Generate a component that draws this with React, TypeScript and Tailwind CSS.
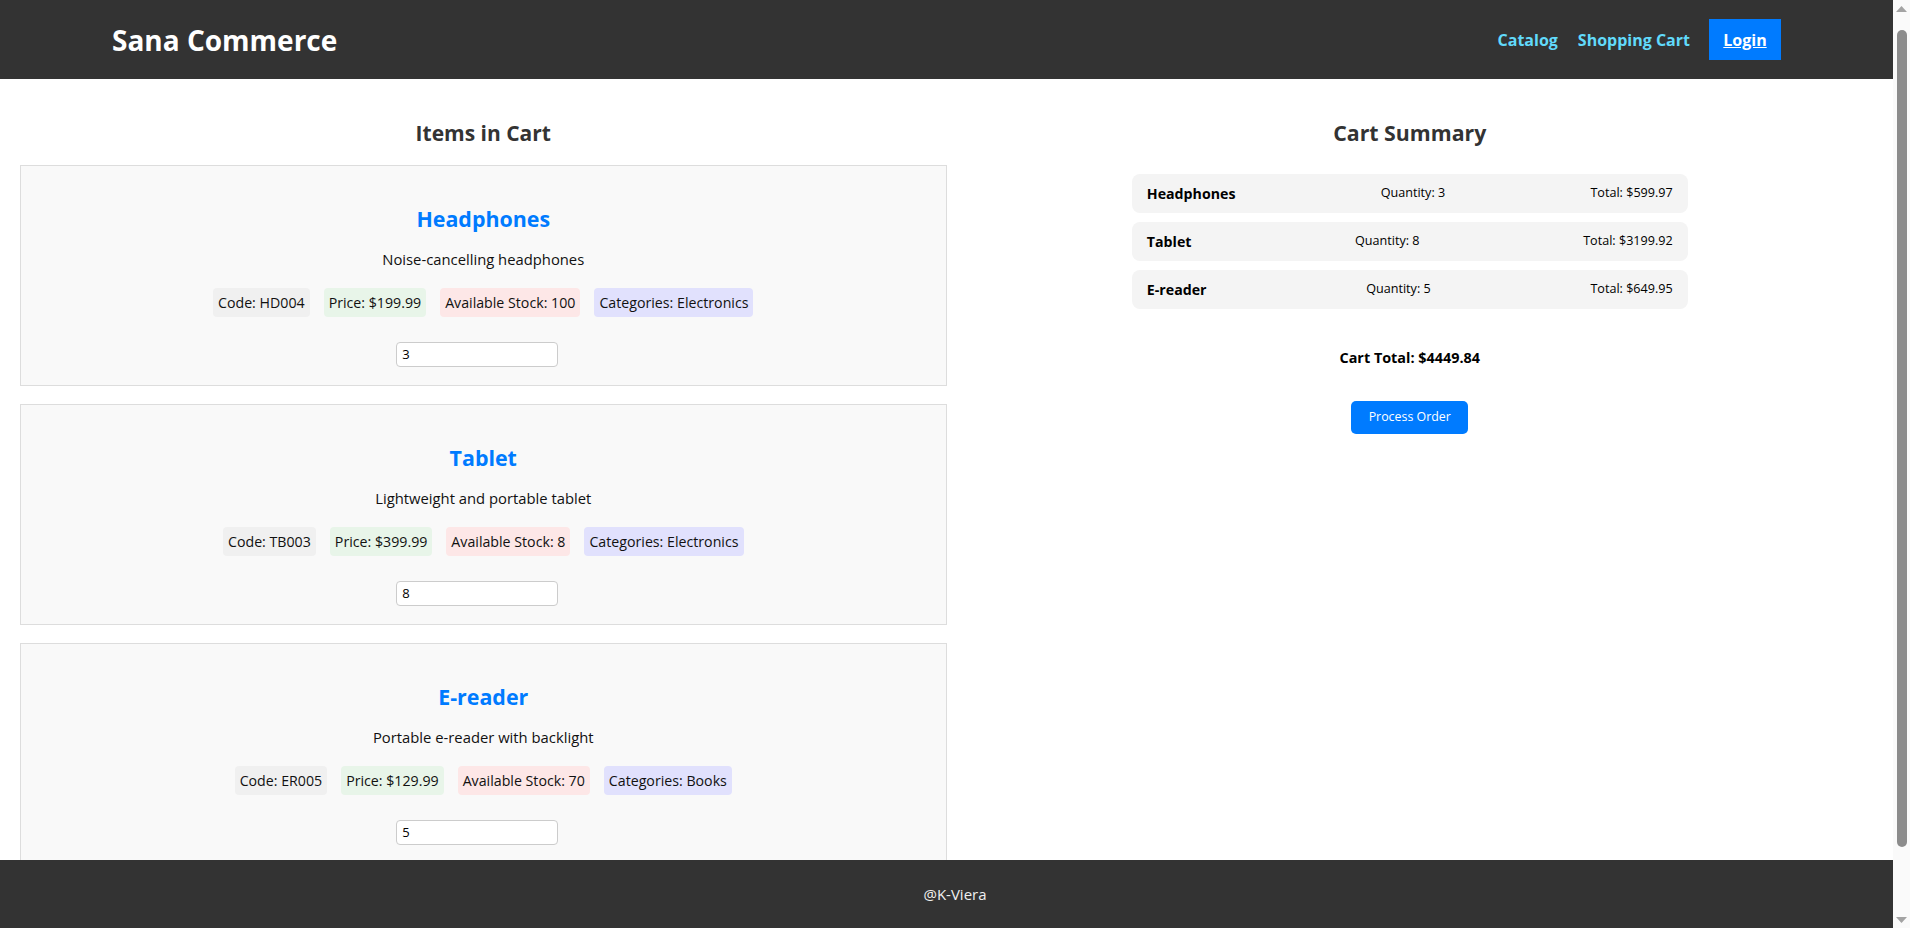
import React from "react";

const items = [
  { name: "Headphones", desc: "Noise-cancelling headphones", code: "HD004", price: "199.99", stock: 100, cat: "Electronics", qty: 3, total: "599.97" },
  { name: "Tablet", desc: "Lightweight and portable tablet", code: "TB003", price: "399.99", stock: 8, cat: "Electronics", qty: 8, total: "3199.92" },
  { name: "E-reader", desc: "Portable e-reader with backlight", code: "ER005", price: "129.99", stock: 70, cat: "Books", qty: 5, total: "649.95" },
];

function Scrollbar() {
  return (
    <div className="w-[17px] h-full bg-[#fafafa] flex flex-col items-center">
      <div className="h-[17px] flex items-center justify-center">
        <svg width="11" height="6" viewBox="0 0 11 6"><polygon points="0,6 5.5,0 11,6" fill="#a3a3a3" /></svg>
      </div>
      <div className="mt-[13px] h-[817px] w-[10px] rounded-full bg-[#8c8c8c]" />
      <div className="flex-1" />
      <div className="h-[17px] flex items-center justify-center">
        <svg width="11" height="6" viewBox="0 0 11 6"><polygon points="0,0 5.5,6 11,0" fill="#a3a3a3" /></svg>
      </div>
    </div>
  );
}

export default function App() {
  return (
    <div className="h-screen w-full flex overflow-hidden bg-white text-[#222]" style={{ fontFamily: '"Open Sans", "Noto Sans", sans-serif' }}>
      <div className="flex-1 flex flex-col min-w-0">
        <header className="h-[79px] shrink-0 bg-[#333333] flex items-center justify-between px-[112px]">
          <h1 className="text-[28px] font-bold text-white leading-none">Sana Commerce</h1>
          <nav className="flex items-center">
            <a className="text-[16px] font-bold text-[#61dafb] mr-[20px]">Catalog</a>
            <a className="text-[16px] font-bold text-[#61dafb] mr-[19px]">Shopping Cart</a>
            <a className="h-[41px] w-[72px] flex items-center justify-center bg-[#007bff] text-white text-[16px] font-bold underline">Login</a>
          </nav>
        </header>

        <main className="flex-1 overflow-hidden flex px-[20px]">
          <section className="w-1/2">
            <h2 className="text-[21px] font-bold text-[#333] text-center leading-[36px] mt-[36px] mb-[14px]">Items in Cart</h2>
            <div className="flex flex-col gap-[18px]">
              {items.map((it) => (
                <div key={it.name} className="h-[221px] shrink-0 border border-[#dddddd] bg-[#f9f9f9] pt-[37px] flex flex-col items-center">
                  <h3 className="text-[21.4px] font-bold text-[#007bff] leading-[32px]">{it.name}</h3>
                  <p className="text-[14.8px] leading-[24px] mt-[12px] text-[#111]">{it.desc}</p>
                  <div className="flex gap-[14px] mt-[17px] text-[14.2px] text-[#111]">
                    <span className="h-[29px] flex items-center px-[5px] rounded-[4px] bg-[#f0f0f0]">Code: {it.code}</span>
                    <span className="h-[29px] flex items-center px-[5px] rounded-[4px] bg-[#e8f5e9]">Price: ${it.price}</span>
                    <span className="h-[29px] flex items-center px-[5px] rounded-[4px] bg-[#fde7e7]">Available Stock: {it.stock}</span>
                    <span className="h-[29px] flex items-center px-[5px] rounded-[4px] bg-[#e1e1fd]">Categories: {it.cat}</span>
                  </div>
                  <div className="mt-[24px] mr-[12px]">
                    <input
                      type="text"
                      defaultValue={String(it.qty)}
                      className="w-[162px] h-[25px] bg-white border border-[#cccccc] rounded-[4px] px-[5px] text-[13px] text-black outline-none"
                    />
                  </div>
                </div>
              ))}
            </div>
          </section>

          <section className="w-1/2 flex flex-col items-center">
            <h2 className="text-[21.3px] font-bold text-[#333] text-center leading-[36px] mt-[36px]">Cart Summary</h2>
            <div className="w-[60%] flex flex-col gap-[9px] mt-[23px]">
              {items.map((it) => (
                <div key={it.name} className="h-[39px] rounded-[8px] bg-[#f4f4f4] px-[15px] flex items-center justify-between text-[12.6px] text-black">
                  <span className="font-bold text-[14.2px]">{it.name}</span>
                  <span>Quantity: {it.qty}</span>
                  <span>Total: ${it.total}</span>
                </div>
              ))}
            </div>
            <p className="mt-[37px] text-[14.4px] font-bold text-black leading-[24px]">Cart Total: $4449.84</p>
            <button className="mt-[31px] w-[117px] h-[33px] rounded-[5px] bg-[#007bff] text-white text-[12.4px]">Process Order</button>
          </section>
        </main>

        <footer className="h-[68px] shrink-0 bg-[#333333] flex items-center justify-center pl-[17px] text-[15px] text-[#f0f0f0]">
          @K-Viera
        </footer>
      </div>
      <Scrollbar />
    </div>
  );
}
